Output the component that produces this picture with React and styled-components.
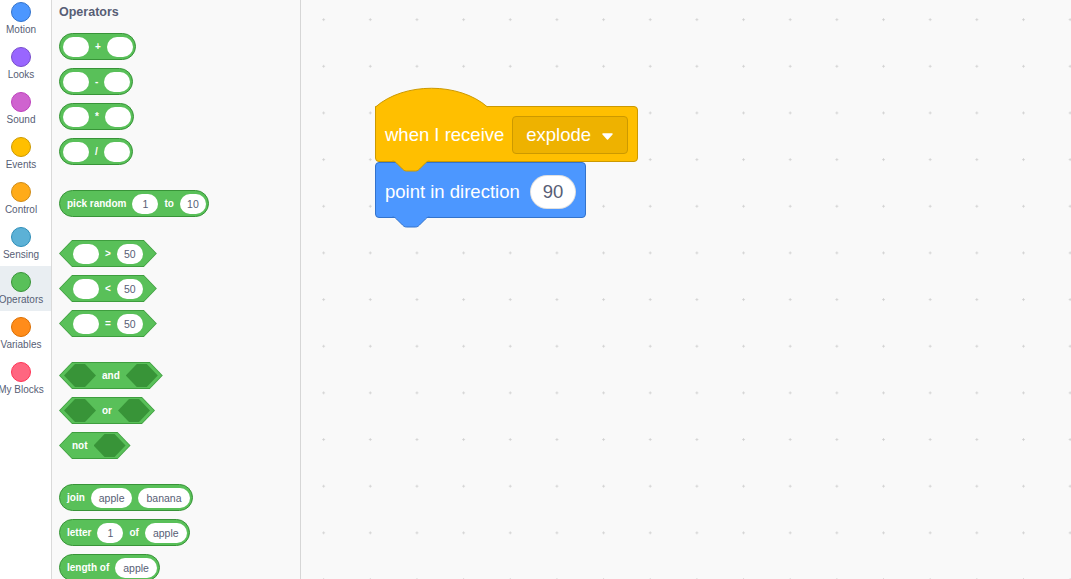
import React from 'react';
import styled, { createGlobalStyle } from 'styled-components';

const GlobalStyle = createGlobalStyle`
  html, body {
    margin: 0;
    padding: 0;
    height: 100%;
    overflow: hidden;
  }
  body {
    font-family: "Liberation Sans", Arial, sans-serif;
    background: #f9f9f9;
  }
`;

const Workspace = styled.div`
  display: flex;
  width: 100%;
  height: 100vh;
`;

/* ---- category menu ---- */

const CategoryMenu = styled.nav`
  flex: none;
  width: 51px;
  background: #fff;
  border-right: 1px solid #dadada;
  overflow: hidden;
`;

const CategoryList = styled.div`
  display: flex;
  flex-direction: column;
  margin-top: -4px;
`;

const CategoryItem = styled.div`
  display: flex;
  flex-direction: column;
  align-items: center;
  gap: 2px;
  height: 45px;
  box-sizing: border-box;
  padding: 6px 9px 0 0;
  background: ${p => (p.$active ? '#e9eef2' : 'transparent')};
`;

const Bubble = styled.div`
  width: 20px;
  height: 20px;
  box-sizing: border-box;
  border-radius: 50%;
  background: ${p => p.$fill};
  border: 1px solid ${p => p.$edge};
`;

const CategoryName = styled.span`
  font-size: 10px;
  line-height: 12px;
  color: #575e75;
  white-space: nowrap;
`;

/* ---- palette ---- */

const Palette = styled.aside`
  flex: none;
  width: 249px;
  box-sizing: border-box;
  padding: 4px 0 0 7px;
  background: #f9f9f9;
  border-right: 1px solid #d6d6d6;
  display: flex;
  flex-direction: column;
  align-items: flex-start;
  overflow: hidden;
`;

const PaletteTitle = styled.div`
  font-size: 12.5px;
  font-weight: bold;
  line-height: 16px;
  color: #575e75;
  margin-bottom: 13px;
`;

const Group = styled.div`
  display: flex;
  flex-direction: column;
  align-items: flex-start;
  gap: 8px;
  margin-top: ${p => p.$mt || 0}px;
`;

const Reporter = styled.div`
  display: inline-flex;
  align-items: center;
  gap: 6px;
  height: 27px;
  box-sizing: border-box;
  padding: 0 2px 0 3px;
  background: #59c059;
  border: 1px solid #389438;
  border-radius: 14px;
  color: #fff;
  font-size: 10px;
  font-weight: bold;
`;

const Word = styled.span`
  white-space: nowrap;
  &:first-child {
    margin-left: 4px;
  }
`;

const Slot = styled.span`
  display: inline-flex;
  align-items: center;
  justify-content: center;
  height: 20px;
  min-width: 26px;
  box-sizing: border-box;
  padding: 0 ${p => (p.$num ? 4 : 8)}px;
  border-radius: 10px;
  background: #fff;
  color: #575e75;
  font-size: 10.5px;
  font-weight: normal;
`;

const HexShell = styled.div`
  display: inline-flex;
  padding: 1px;
  background: #3e9e3e;
  clip-path: polygon(13px 0, calc(100% - 13px) 0, 100% 50%, calc(100% - 13px) 100%, 13px 100%, 0 50%);
`;

const HexBody = styled.div`
  display: flex;
  align-items: center;
  gap: 6px;
  height: 25px;
  padding: 0 ${p => p.$r}px 0 ${p => p.$l}px;
  background: #59c059;
  color: #fff;
  font-size: 10px;
  font-weight: bold;
  clip-path: polygon(12px 0, calc(100% - 12px) 0, 100% 50%, calc(100% - 12px) 100%, 12px 100%, 0 50%);
`;

const BoolSlot = styled.span`
  width: 32px;
  height: 23px;
  background: #389438;
  clip-path: polygon(11px 0, 21px 0, 100% 50%, 21px 100%, 11px 100%, 0 50%);
`;

const Hex = ({ l = 13, r = 13, children }) => (
  <HexShell>
    <HexBody $l={l} $r={r}>{children}</HexBody>
  </HexShell>
);

/* ---- script canvas ---- */

const Canvas = styled.main`
  flex: 1;
  position: relative;
  background-color: #f9f9f9;
  background-image: radial-gradient(circle at center, #d2d2d2 0, #d2d2d2 0.9px, transparent 1.4px);
  background-size: 46.67px 46.67px;
  background-position: -0.7px -3.7px;
  overflow: hidden;
`;

const Script = styled.div`
  position: absolute;
  left: 74px;
  top: 106px;
  display: flex;
  flex-direction: column;
  align-items: flex-start;
`;

const HatBlock = styled.div`
  position: relative;
  z-index: 2;
  display: flex;
  align-items: center;
  gap: 8px;
  height: 56px;
  box-sizing: border-box;
  padding: 1px 9px 0;
  background: #ffbf00;
  border: 1px solid #cc9900;
  border-radius: 0 4px 4px 4px;
  color: #fff;
  font-size: 18.5px;
`;

const StackBlock = styled.div`
  position: relative;
  display: flex;
  align-items: center;
  gap: 10px;
  height: 56px;
  box-sizing: border-box;
  padding: 3px 9px 0;
  background: #4c97ff;
  border: 1px solid #3373cc;
  border-radius: 4px;
  color: #fff;
  font-size: 18.5px;
`;

const BlockText = styled.span`
  white-space: nowrap;
`;

const Dropdown = styled.div`
  display: flex;
  align-items: center;
  gap: 11px;
  height: 38px;
  box-sizing: border-box;
  padding: 0 14px 0 13px;
  background: #eeb200;
  border: 1px solid #cc9900;
  border-radius: 4px;
`;

const NumberSlot = styled.span`
  display: inline-flex;
  align-items: center;
  justify-content: center;
  height: 34px;
  min-width: 46px;
  box-sizing: border-box;
  padding: 0 12px;
  border-radius: 17px;
  background: #fff;
  border: 1px solid rgba(0, 0, 0, 0.12);
  color: #575e75;
`;

const CapSvg = styled.svg`
  position: absolute;
  left: -1px;
  top: -20px;
  overflow: visible;
`;

const NotchSvg = styled.svg`
  position: absolute;
  left: 16px;
  top: calc(100% - 1px);
  overflow: visible;
`;

const ArrowSvg = styled.svg`
  margin-top: 3px;
`;

const Cap = ({ fill, stroke }) => (
  <CapSvg width="114" height="21" viewBox="0 0 114 21">
    <path d="M0.5 20 C29 -5 84 -5 112.5 20" fill={fill} stroke={stroke} />
  </CapSvg>
);

const Notch = ({ fill, stroke }) => (
  <NotchSvg width="38" height="12" viewBox="0 0 38 12">
    <path
      d="M0.5 1 c2 0 3 1 4 2 l6 6 c1 1 2 2 4 2 h9 c2 0 3 -1 4 -2 l6 -6 c1 -1 2 -2 4 -2"
      fill={fill}
      stroke={stroke}
    />
  </NotchSvg>
);

const categories = [
  { name: 'Motion', fill: '#4c97ff', edge: '#3373cc' },
  { name: 'Looks', fill: '#9966ff', edge: '#774dcb' },
  { name: 'Sound', fill: '#cf63cf', edge: '#bd42bd' },
  { name: 'Events', fill: '#ffbf00', edge: '#cc9900' },
  { name: 'Control', fill: '#ffab19', edge: '#cf8b17' },
  { name: 'Sensing', fill: '#5cb1d6', edge: '#2e8eb8' },
  { name: 'Operators', fill: '#59c059', edge: '#389438', active: true },
  { name: 'Variables', fill: '#ff8c1a', edge: '#db6e00' },
  { name: 'My Blocks', fill: '#ff6680', edge: '#ff3355' },
];

export default function App() {
  return (
    <>
      <GlobalStyle />
      <Workspace>
        <CategoryMenu>
          <CategoryList>
            {categories.map(c => (
              <CategoryItem key={c.name} $active={c.active}>
                <Bubble $fill={c.fill} $edge={c.edge} />
                <CategoryName>{c.name}</CategoryName>
              </CategoryItem>
            ))}
          </CategoryList>
        </CategoryMenu>

        <Palette>
          <PaletteTitle>Operators</PaletteTitle>

          <Group>
            {['+', '-', '*', '/'].map(op => (
              <Reporter key={op}>
                <Slot />
                <span>{op}</span>
                <Slot />
              </Reporter>
            ))}
          </Group>

          <Group $mt={25}>
            <Reporter>
              <Word>pick random</Word>
              <Slot $num>1</Slot>
              <Word>to</Word>
              <Slot $num>10</Slot>
            </Reporter>
          </Group>

          <Group $mt={23}>
            {['>', '<', '='].map(op => (
              <Hex key={op}>
                <Slot />
                <span>{op}</span>
                <Slot $num>50</Slot>
              </Hex>
            ))}
          </Group>

          <Group $mt={25}>
            <Hex l={4} r={4}>
              <BoolSlot />
              <span>and</span>
              <BoolSlot />
            </Hex>
            <Hex l={4} r={4}>
              <BoolSlot />
              <span>or</span>
              <BoolSlot />
            </Hex>
            <Hex l={12} r={4}>
              <span>not</span>
              <BoolSlot />
            </Hex>
          </Group>

          <Group $mt={25}>
            <Reporter>
              <Word>join</Word>
              <Slot>apple</Slot>
              <Slot>banana</Slot>
            </Reporter>
            <Reporter>
              <Word>letter</Word>
              <Slot $num>1</Slot>
              <Word>of</Word>
              <Slot>apple</Slot>
            </Reporter>
            <Reporter>
              <Word>length of</Word>
              <Slot>apple</Slot>
            </Reporter>
          </Group>
        </Palette>

        <Canvas>
          <Script>
            <HatBlock>
              <Cap fill="#ffbf00" stroke="#cc9900" />
              <BlockText>when I receive</BlockText>
              <Dropdown>
                <BlockText>explode</BlockText>
                <ArrowSvg width="11" height="7" viewBox="0 0 11 7">
                  <path d="M1 1 H10 L5.5 6 Z" fill="#fff" stroke="#fff" strokeWidth="1.5" strokeLinejoin="round" />
                </ArrowSvg>
              </Dropdown>
              <Notch fill="#ffbf00" stroke="#cc9900" />
            </HatBlock>
            <StackBlock>
              <BlockText>point in direction</BlockText>
              <NumberSlot>90</NumberSlot>
              <Notch fill="#4c97ff" stroke="#3373cc" />
            </StackBlock>
          </Script>
        </Canvas>
      </Workspace>
    </>
  );
}
